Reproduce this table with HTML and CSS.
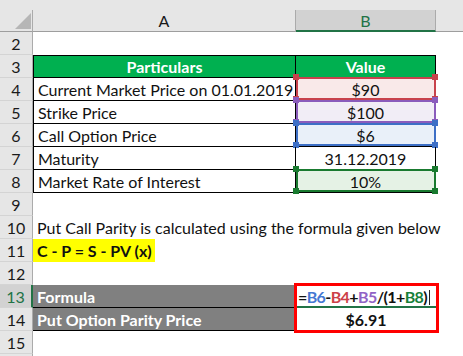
FILE: index.html
```html
<!DOCTYPE html>
<html>
<head>
<meta charset="utf-8">
<link rel="stylesheet" href="styles.css">
</head>
<body>
<div class="sheet">
  <div class="topstrip"></div>

  <div class="corner"><svg class="tri" width="16" height="16" viewBox="0 0 16 16"><polygon points="16,0 16,16 0,16" fill="#b6b6b6"/></svg></div>
  <div class="colhead">A</div>
  <div class="colhead sel">B</div>
  <div class="colrest"></div>

  <div class="rh">2</div><div class="cell"></div><div class="cell"></div><div class="rest"></div>

  <div class="rh">3</div><div class="cell t a th">Particulars</div><div class="cell t b th">Value</div><div class="rest"></div>

  <div class="rh">4</div><div class="cell a txt">Current Market Price on 01.01.2019</div>
  <div class="cell b val red"><span>$90</span><i class="hl"></i></div><div class="rest"></div>

  <div class="rh">5</div><div class="cell a txt">Strike Price</div>
  <div class="cell b val purple"><span>$100</span><i class="hl"></i></div><div class="rest"></div>

  <div class="rh">6</div><div class="cell a txt">Call Option Price</div>
  <div class="cell b val blue"><span>$6</span><i class="hl"></i></div><div class="rest"></div>

  <div class="rh">7</div><div class="cell a txt">Maturity</div>
  <div class="cell b val"><span>31.12.2019</span></div><div class="rest"></div>

  <div class="rh">8</div><div class="cell a txt">Market Rate of Interest</div>
  <div class="cell b val green"><span>10%</span><i class="hl"></i></div><div class="rest"></div>

  <div class="rh">9</div><div class="cell"></div><div class="cell"></div><div class="rest"></div>

  <div class="rh">10</div><div class="cell span2 txt">Put Call Parity is calculated using the formula given below</div><div class="rest"></div>

  <div class="rh">11</div><div class="cell"><span class="yellow">C - P = S - PV (x)</span></div><div class="cell"></div><div class="rest"></div>

  <div class="rh">12</div><div class="cell"></div><div class="cell"></div><div class="rest"></div>

  <div class="rh selrow">13</div><div class="cell grey">Formula</div>
  <div class="cell edit"><span class="fx"><b>=</b><b class="fb">B6</b><b>-</b><b class="fr">B4</b><b>+</b><b class="fp">B5</b><b>/(1+</b><b class="fg">B8</b><b>)</b></span><i class="caret"></i><i class="editline"></i><i class="redbox"></i></div><div class="rest"></div>

  <div class="rh">14</div><div class="cell grey">Put Option Parity Price</div>
  <div class="cell result">$6.91</div><div class="rest"></div>

  <div class="rh">15</div><div class="cell"></div><div class="cell"></div><div class="rest"></div>
  <div class="rh"></div><div class="cell"></div><div class="cell"></div><div class="rest"></div>
</div>
</body>
</html>
```

FILE: styles.css
```css
html, body {
  margin: 0;
  padding: 0;
  background: #ffffff;
}
body {
  width: 463px;
  height: 356px;
  overflow: hidden;
  font-family: Lato, "Liberation Sans", sans-serif;
  font-size: 16px;
  color: #111;
}
.sheet {
  display: grid;
  grid-template-columns: 33px 263px 140px 1fr;
  grid-template-rows: 10px 22px;
  grid-auto-rows: 23px;
}
.topstrip {
  grid-column: 1 / -1;
  background: #e6e6e6;
}
.corner {
  background: #e6e6e6;
  border-right: 1px solid #ababab;
  border-bottom: 1px solid #9e9e9e;
  box-sizing: border-box;
  position: relative;
}
.tri {
  position: absolute;
  left: 15px;
  top: 3px;
}
.colhead {
  background: #e6e6e6;
  border-right: 1px solid #ababab;
  border-bottom: 1px solid #9e9e9e;
  box-sizing: border-box;
  text-align: center;
  line-height: 21px;
  color: #1a1a1a;
}
.colhead.sel {
  background: #d2d2d2;
  color: #217346;
  border-bottom: 2px solid #217346;
  line-height: 21px;
}
.colrest {
  background: #e6e6e6;
  border-bottom: 1px solid #9e9e9e;
  box-sizing: border-box;
}
.rh {
  background: #e6e6e6;
  border-right: 1px solid #ababab;
  border-bottom: 1px solid #d4d4d4;
  box-sizing: border-box;
  text-align: center;
  line-height: 23px;
  color: #1a1a1a;
}
.rh.selrow {
  background: #d2d2d2;
  color: #217346;
  border-right: 2px solid #217346;
}
.cell {
  box-sizing: border-box;
  line-height: 23px;
  white-space: nowrap;
  position: relative;
}
.rest { }
.span2 {
  grid-column: 2 / 4;
}
.txt {
  padding-left: 4px;
}
.a {
  border-left: 1px solid #000;
  border-right: 1px solid #000;
  border-bottom: 1px solid #000;
}
.b {
  border-right: 1px solid #000;
  border-bottom: 1px solid #000;
}
.t {
  border-top: 1px solid #000;
  line-height: 21px;
}
.th {
  background: #00b050;
  color: #ffffff;
  font-weight: 700;
  text-align: center;
}
.val {
  text-align: center;
}
.val span {
  position: relative;
  z-index: 1;
}
.red { background: #f9e9e9; --c: #c8424c; }
.purple { background: #f1edf6; --c: #8a5cbc; }
.blue { background: #e9f0f9; --c: #3d6fc6; }
.green { background: #e5f2e5; --c: #197a2f; }
.hl {
  position: absolute;
  left: -3px;
  right: -3px;
  top: -4px;
  bottom: -2px;
  background:
    linear-gradient(var(--c), var(--c)) left top / 6px 6px no-repeat,
    linear-gradient(var(--c), var(--c)) right top / 6px 6px no-repeat,
    linear-gradient(var(--c), var(--c)) left bottom / 6px 6px no-repeat,
    linear-gradient(var(--c), var(--c)) right bottom / 6px 6px no-repeat;
}
.hl::before {
  content: "";
  position: absolute;
  left: 3px;
  right: 2px;
  top: 3px;
  bottom: 2px;
  border: 2px solid var(--c);
}
.yellow {
  display: inline-block;
  height: 23px;
  width: 118px;
  padding-left: 4px;
  background: #ffff00;
  font-weight: 700;
}
.grey {
  background: #808080;
  color: #ffffff;
  font-weight: 700;
  padding-left: 4px;
  border-bottom: 1px solid #000;
}
.edit {
  padding-left: 2px;
  border-bottom: 1px solid #000;
}
.fx { letter-spacing: -0.6px; }
.fx b { font-weight: 700; color: #111; }
.fx .fb { color: #4578d2; }
.fx .fr { color: #cc4148; }
.fx .fp { color: #9163c6; }
.fx .fg { color: #17803a; }
.caret {
  position: absolute;
  left: 133px;
  top: 5px;
  width: 1px;
  height: 15px;
  background: #222;
}
.editline {
  position: absolute;
  left: 1px;
  right: 0;
  bottom: -1px;
  height: 2px;
  background: #217346;
}
.redbox {
  position: absolute;
  left: -2px;
  right: -3px;
  top: -2px;
  bottom: -26px;
  border: 3px solid #ff0000;
  z-index: 2;
}
.result {
  text-align: center;
  font-weight: 700;
  border-bottom: 1px solid #000;
}
```
